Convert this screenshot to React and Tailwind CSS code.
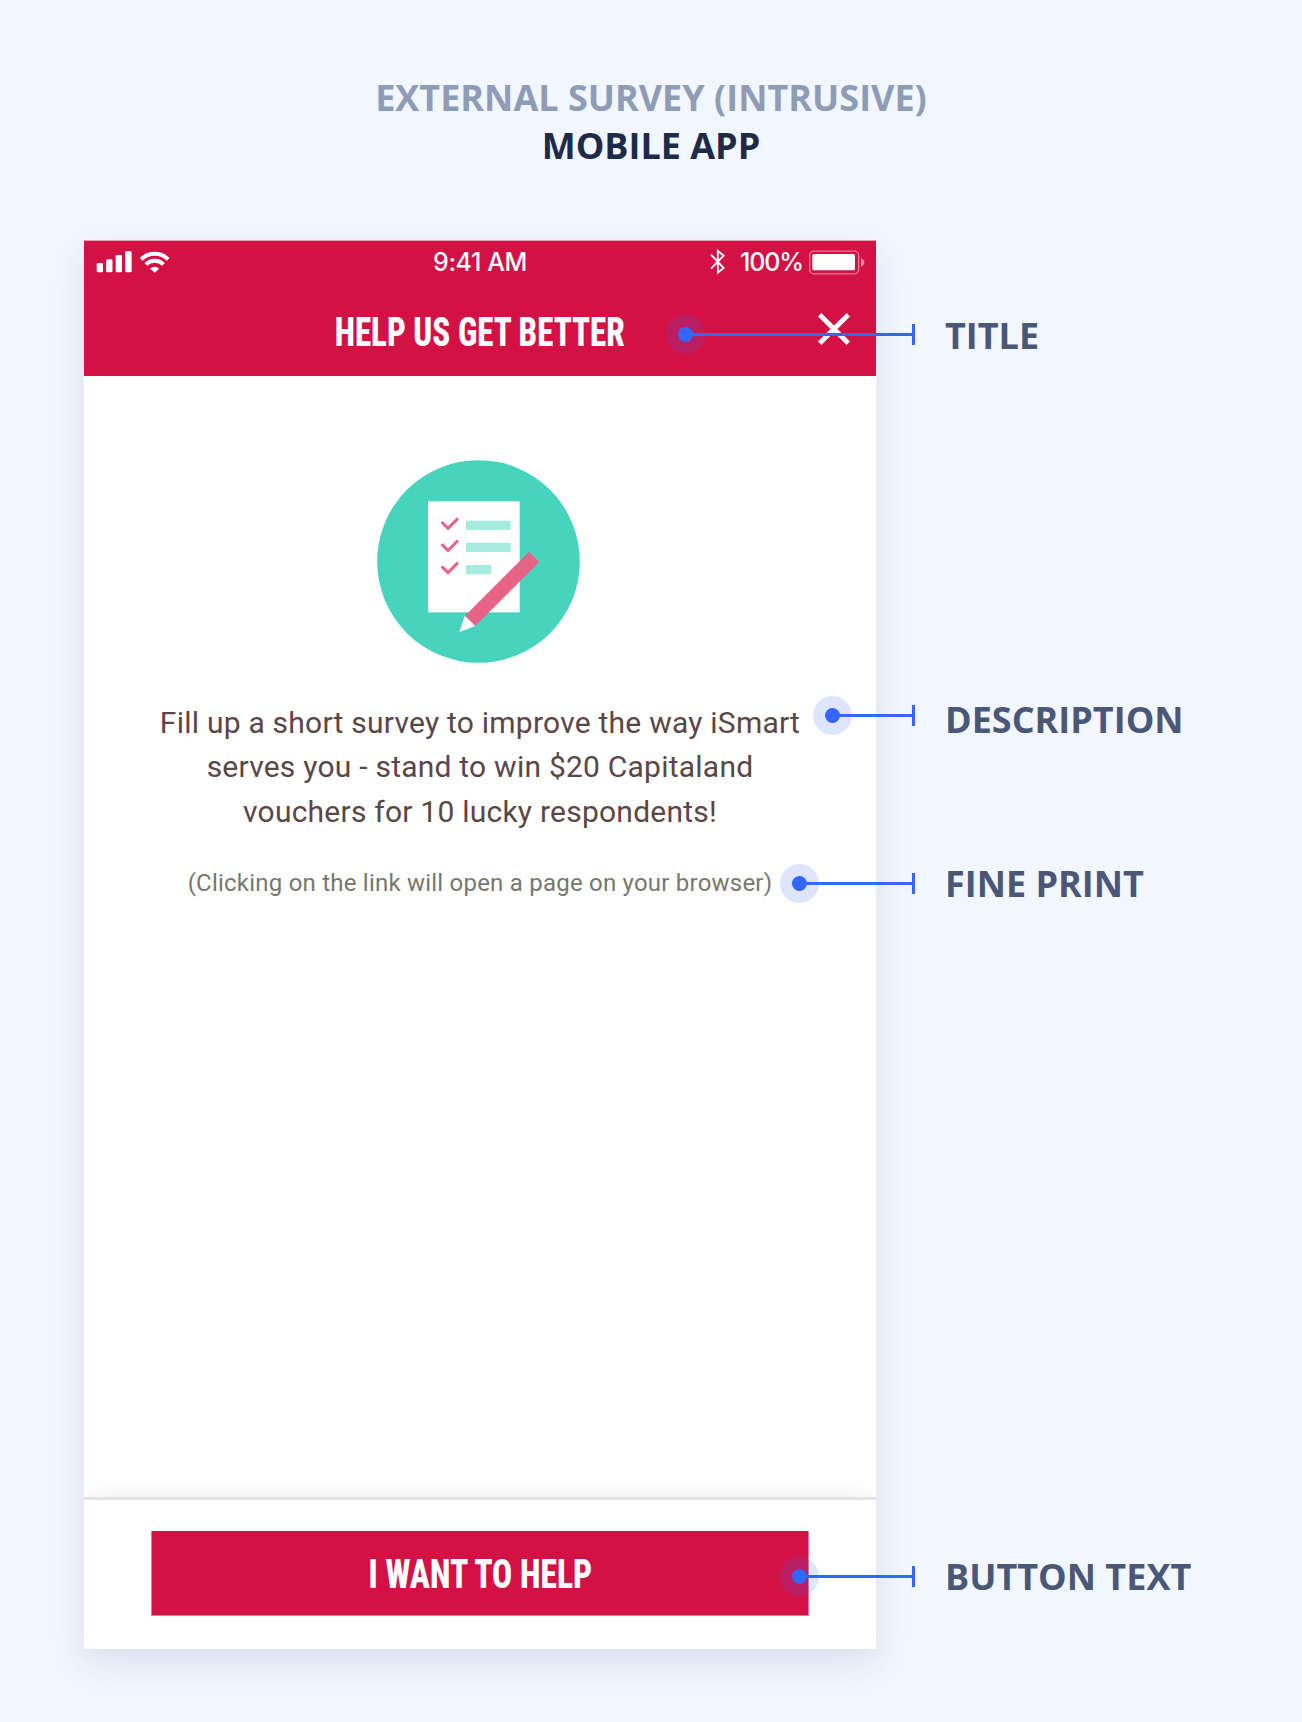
function StatusBar() {
  return (
    <div className="grid h-[40px] grid-cols-3 items-start text-white font-['Inter',sans-serif] text-[25px] leading-[40px] font-[450]">
      <svg className="ml-[6px] h-[40px] w-[90px]" viewBox="0 0 270 120" fill="currentColor">
        <rect x="20" y="69" width="19" height="28" rx="4" />
        <rect x="48.500" y="58" width="19" height="39" rx="4" />
        <rect x="77" y="45" width="19" height="52" rx="4" />
        <rect x="105.500" y="34" width="19.500" height="63" rx="4" />
        <g fill="none" stroke="currentColor" strokeWidth="12">
          <path d="M153.500 58 A58 58 0 0 1 234.500 58" />
          <path d="M167.500 73 A37.500 37.500 0 0 1 220.500 73" />
        </g>
        <path d="M180.500 86 A19 19 0 0 1 207.500 86 L194 98.500 Z" />
      </svg>
      <span className="relative top-[2px] text-center tracking-[-0.4px]">9:41 AM</span>
      <div className="flex justify-end pr-[11px]">
        <svg className="h-[40px] w-[20px]" viewBox="0 0 60 120" fill="none" stroke="currentColor" strokeWidth="5.500">
          <path d="M12 44 L50 84 L32.500 98 V33 L50 47 L12 86" />
        </svg>
        <span className="relative top-[2px] ml-[13px] w-[64px] tracking-[-1.1px]">100%</span>
        <svg className="ml-[4px] h-[40px] w-[57px]" viewBox="354 0 171 120">
          <rect x="359" y="33.500" width="147" height="68" rx="13" fill="none" stroke="#fff" strokeOpacity=".45" strokeWidth="4" />
          <rect x="367" y="42" width="128" height="49" rx="5" fill="#fff" />
          <path d="M513 54 Q523 59 523 67.500 Q523 76 513 81 Z" fill="#fff" fillOpacity=".5" />
        </svg>
      </div>
    </div>
  );
}

function SurveyIcon() {
  return (
    <svg className="ml-[293.4px] h-[203px] w-[203px]" viewBox="52 60 609 609">
      <circle cx="356.500" cy="364.500" r="304" fill="#47d4bf" />
      <rect x="205" y="184" width="275" height="333" fill="#fff" />
      <g fill="#a6ebdf">
        <rect x="319" y="242" width="134" height="28" />
        <rect x="319" y="308" width="134" height="28" />
        <rect x="319" y="375" width="76" height="28" />
      </g>
      <g fill="none" stroke="#e86487" strokeWidth="9">
        <path d="M246 246 L265 265 L295 235" />
        <path d="M246 312.500 L265 331.500 L295 301.500" />
        <path d="M246 379 L265 398 L295 368" />
      </g>
      <path d="M508 335 L539 366 L347 558 L316 527 Z" fill="#e86487" />
      <path d="M315 527 L347 558 L299 576 Z" fill="#fff" />
    </svg>
  );
}

function Callout({ place, label, nudge }) {
  return (
    <div className={`absolute right-[97px] flex h-[39px] items-center ${place}`}>
      <div className="flex size-[39px] shrink-0 items-center justify-center rounded-full bg-[#3366ff]/16">
        <div className="size-[15px] rounded-full bg-[#3366ff]" />
      </div>
      <div className="-ml-[19px] h-[3px] grow bg-[#3366ff]" />
      <div className="h-[21px] w-[3px] shrink-0 bg-[#3366ff]" />
      <div className={`ml-[30px] w-[260px] shrink-0 whitespace-nowrap leading-[39px] text-[#4a5776] ${nudge}`}>{label}</div>
    </div>
  );
}

export default function App() {
  return (
    <div className="relative h-[1722px] w-[1302px] overflow-hidden bg-[#f2f6ff] pt-[74px] font-['Open_Sans',sans-serif] text-[36px] font-bold">
      <header className="text-center leading-[48px]">
        <div className="text-[#8f9cb6]">EXTERNAL SURVEY (INTRUSIVE)</div>
        <div className="text-[#1f2a47]">MOBILE APP</div>
      </header>

      <main className="mt-[70px] ml-[84px] flex h-[1409px] w-[792px] flex-col bg-white font-['Roboto',sans-serif] font-normal shadow-[0_14px_32px_rgba(40,50,80,0.11)]">
        <div className="h-[136px] border-t border-[#e19bb3] bg-[#d41144]">
          <div className="-mt-px">
            <StatusBar />
          </div>
          <div className="relative flex h-[96px] justify-center">
            <h1 className="relative top-[29px] h-[48px] origin-center scale-x-[0.825] text-[40px] leading-[48px] font-[800] text-white [font-stretch:75%]">
              HELP US GET BETTER
            </h1>
            <svg className="absolute top-[33px] right-[26px] h-[32px] w-[32px]" viewBox="0 0 32 32" stroke="#fff" strokeWidth="4.800">
              <path d="M1.700 1.700 L30.300 30.300 M30.300 1.700 L1.700 30.300" />
            </svg>
          </div>
        </div>

        <section className="flex grow flex-col pt-[84px]">
          <SurveyIcon />
          <p className="mt-[38px] text-center text-[30px] leading-[44.3px] tracking-[0.23px] text-[#5b4646]">
            Fill up a short survey to improve the way iSmart
            <br />
            serves you - stand to win $20 Capitaland
            <br />
            vouchers for 10 lucky respondents!
          </p>
          <p className="mt-[32px] text-center text-[24px] leading-[34px] tracking-[0.22px] text-[#77776e]">
            (Clicking on the link will open a page on your browser)
          </p>
        </section>

        <footer className="h-[152px] border-t-[3px] border-[#e3e3df] bg-white px-[67px] pt-[31px] shadow-[0_-6px_20px_-6px_rgba(0,0,0,0.08)] [clip-path:inset(-40px_0_0_0)]">
          <button className="flex h-[85px] w-full justify-center border-x border-b border-[#e87795] bg-[#d41144] text-[40px] leading-[48px] font-[800] text-white">
            <span className="relative top-[20px] scale-x-[0.838] [font-stretch:75%]">I WANT TO HELP</span>
          </button>
        </footer>
      </main>

      <Callout place="top-[315px] left-[666px]" label="TITLE" nudge="translate-y-px" />
      <Callout place="top-[696px] left-[813px]" label="DESCRIPTION" nudge="translate-y-[4px]" />
      <Callout place="top-[864px] left-[780px]" label="FINE PRINT" nudge="translate-y-0" />
      <Callout place="top-[1557px] left-[780px]" label="BUTTON TEXT" nudge="translate-y-0" />
    </div>
  );
}
